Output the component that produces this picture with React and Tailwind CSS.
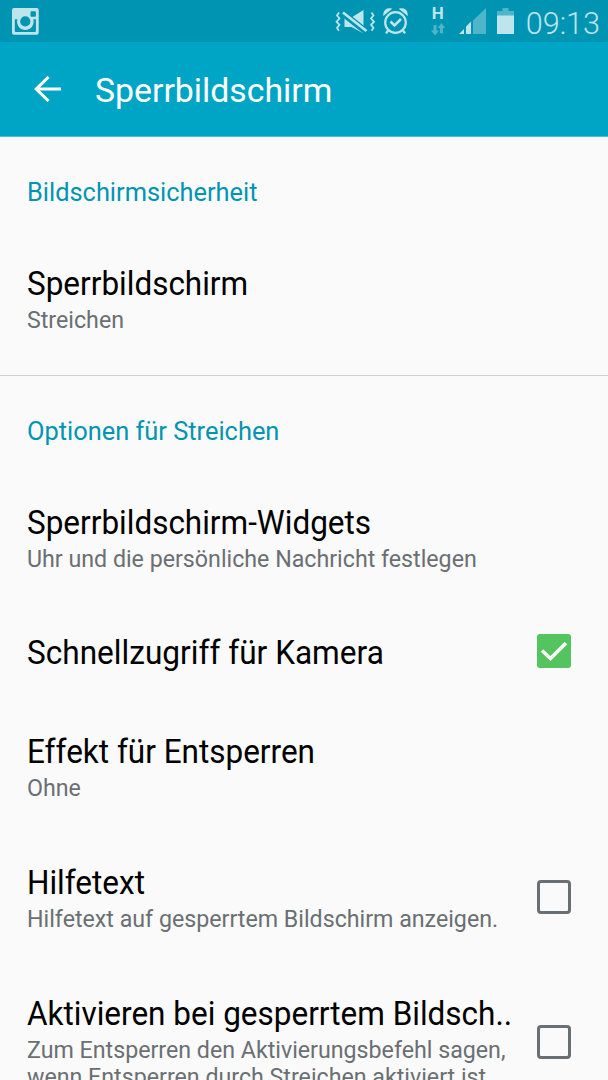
import React from 'react'

const securityItems = [{ title: 'Sperrbildschirm', summary: 'Streichen' }]

const swipeItems = [
  { title: 'Sperrbildschirm-Widgets', summary: 'Uhr und die persönliche Nachricht festlegen' },
  { title: 'Schnellzugriff für Kamera', checked: true },
  { title: 'Effekt für Entsperren', summary: 'Ohne' },
  { title: 'Hilfetext', summary: 'Hilfetext auf gesperrtem Bildschirm anzeigen.', checked: false },
  {
    title: 'Aktivieren bei gesperrtem Bildsch..',
    summary: 'Zum Entsperren den Aktivierungsbefehl sagen, wenn Entsperren durch Streichen aktiviert ist.',
    checked: false,
  },
]

function InstagramIcon() {
  return (
    <svg className="h-[27px] w-[27px]" viewBox="0 0 27 27">
      <path
        fill="#bfe5ec"
        fillRule="evenodd"
        d="M2 0h22.700a2 2 0 0 1 2 2v22.700a2 2 0 0 1-2 2H2a2 2 0 0 1-2-2V2a2 2 0 0 1 2-2zM19.500 3.300a1 1 0 0 0-1 1v3.400a1 1 0 0 0 1 1h3.400a1 1 0 0 0 1-1V4.300a1 1 0 0 0-1-1zM2.800 11.300v11.700a1 1 0 0 0 1 1h19.100a1 1 0 0 0 1-1V11.300h-2.600a8.300 8.300 0 1 1-15.900 0zM13.300 8.300a5.100 5.100 0 1 0 0 10.200a5.100 5.100 0 0 0 0-10.200z"
      />
    </svg>
  )
}

function VibrateIcon() {
  return (
    <svg className="h-[24px] w-[40px]" viewBox="0 0 40 24" fill="none">
      <path d="M9.500 7.500h7L28.500 0v23.500L16.500 17h-7z" fill="#bfe5ec" />
      <path d="M5 1l26 20.500" stroke="#0094b3" strokeWidth="6.500" />
      <path d="M8 2.500l23.500 18.500" stroke="#bfe5ec" strokeWidth="2.600" />
      <path
        d="M4 2.500l-2 3 2.500 3-3 3.200 3 3.200-2.500 3 2 2.800M36.500 2.500l2 3-2.500 3 3 3.200-3 3.200 2.500 3-2 2.800"
        stroke="#bfe5ec"
        strokeWidth="1.700"
      />
    </svg>
  )
}

function AlarmIcon() {
  return (
    <svg className="h-[27px] w-[25px]" viewBox="0 0 25 27" fill="none" stroke="#bfe5ec">
      <circle cx="12.500" cy="14.500" r="10.300" strokeWidth="2.200" />
      <path d="M7.500 13.500l4 4 6.500-6.500" strokeWidth="2.500" />
      <path d="M1.200 6A5 5 0 0 1 7.200 1.200zM23.800 6A5 5 0 0 0 17.800 1.200z" fill="#bfe5ec" strokeWidth="1.800" />
      <path d="M5 22.500l-2 2.800M20 22.500l2 2.800" strokeWidth="2.300" />
    </svg>
  )
}

function NetworkIcon() {
  return (
    <div className="flex h-[34px] w-[16px] flex-col items-center">
      <span className="text-[17px] leading-[16px] font-bold text-[#bfe5ec]">H</span>
      <svg className="mt-0.5 h-[13px] w-[14px]" viewBox="0 0 14 13" fill="#4fb5ca">
        <path d="M2.500 2h3v5.500H8L4 12.500 0 7.500h2.500zM8.900 10.300h3V5h2.300L10.400 0 6.700 5h2.200z" />
      </svg>
    </div>
  )
}

function SignalIcon() {
  return (
    <svg className="h-[27px] w-[27px]" viewBox="0 0 27 27">
      <path d="M0 26L5 21v5zM7 18.500L12 13.500v12.500H7z" fill="#bfe5ec" />
      <path d="M14 12.500L27 0v26H14z" fill="#4fb5ca" />
    </svg>
  )
}

function BatteryIcon() {
  return (
    <svg className="h-[27px] w-[17px]" viewBox="0 0 17 27">
      <path d="M5.500 0h6v3H17v5H0V3h5.500z" fill="#4fb5ca" />
      <path d="M0 7.500h17V26H0z" fill="#bfe5ec" />
    </svg>
  )
}

function StatusBar() {
  return (
    <div className="flex h-[42px] items-center bg-[#0094b3] pt-px pr-[8px] pl-3">
      <InstagramIcon />
      <div className="ml-auto flex items-center">
        <VibrateIcon />
        <div className="ml-2">
          <AlarmIcon />
        </div>
        <div className="ml-[22px]">
          <NetworkIcon />
        </div>
        <div className="ml-[13px]">
          <SignalIcon />
        </div>
        <div className="ml-[11px]">
          <BatteryIcon />
        </div>
        <span className="ml-3 pt-[4px] text-[30.600px] leading-[37px] font-light text-[#bfe5ec]">09:13</span>
      </div>
    </div>
  )
}

function ActionBar() {
  return (
    <header className="flex h-[95px] items-center border-b border-[#4fbdd2] bg-[#00a5c6] pl-[34px] text-white">
      <svg className="h-[26px] w-[28px]" viewBox="0 0 28 26" fill="none" stroke="currentColor" strokeWidth="3">
        <path d="M14.500 1L2.200 13l12.300 12M2.200 13H27" />
      </svg>
      <h1 className="ml-[33px] pt-1 text-[33.8px] leading-[40px]">Sperrbildschirm</h1>
    </header>
  )
}

function Checkbox({ checked }) {
  if (checked) {
    return (
      <span role="checkbox" aria-checked="true" className="block h-[34px] w-[34px] rounded-[3px] bg-[#54c45e]">
        <svg className="h-[34px] w-[34px]" viewBox="0 0 34 34" fill="none" stroke="#fafafa" strokeWidth="3.600">
          <path d="M5 16.500l8.500 8L29 9" />
        </svg>
      </span>
    )
  }
  return <span role="checkbox" aria-checked="false" className="block h-[34px] w-[34px] rounded-[4px] border-3 border-[#6a6f73]" />
}

function SectionTitle({ children }) {
  return <h2 className="flex h-[95px] items-center px-[27px] pt-[14px] text-[25.4px] leading-[30px] text-[#0094b3]">{children}</h2>
}

function SettingRow({ title, summary, checked }) {
  return (
    <div className={summary ? 'flex items-center px-[27px] pt-[31px] pb-[30px]' : 'flex items-center px-[27px] py-[29px]'}>
      <div className="w-[500px]">
        <div className={summary ? 'h-[43px]' : 'h-[40px]'}>
          <div
            className={
              summary
                ? 'origin-left scale-x-[0.954] text-[33px] leading-[41px] whitespace-nowrap text-black'
                : 'origin-left scale-x-[0.957] pt-px text-[33px] leading-[41px] whitespace-nowrap text-black'
            }
          >
            {title}
          </div>
        </div>
        {summary && (
          <div className="w-[526px] origin-left scale-x-[0.947] text-[24.5px] leading-[27px] text-[#6a6f73]">{summary}</div>
        )}
      </div>
      {checked !== undefined && (
        <div className="ml-[10px] shrink-0">
          <Checkbox checked={checked} />
        </div>
      )}
    </div>
  )
}

export default function App() {
  return (
    <div className="h-[1080px] w-[608px] overflow-hidden bg-[#fafafa] font-['Roboto',sans-serif]">
      <StatusBar />
      <ActionBar />
      <section className="border-b border-[#cfcfcf] pb-3">
        <SectionTitle>Bildschirmsicherheit</SectionTitle>
        {securityItems.map((item) => (
          <SettingRow key={item.title} {...item} />
        ))}
      </section>
      <section>
        <SectionTitle>Optionen für Streichen</SectionTitle>
        {swipeItems.map((item) => (
          <SettingRow key={item.title} {...item} />
        ))}
      </section>
    </div>
  )
}
